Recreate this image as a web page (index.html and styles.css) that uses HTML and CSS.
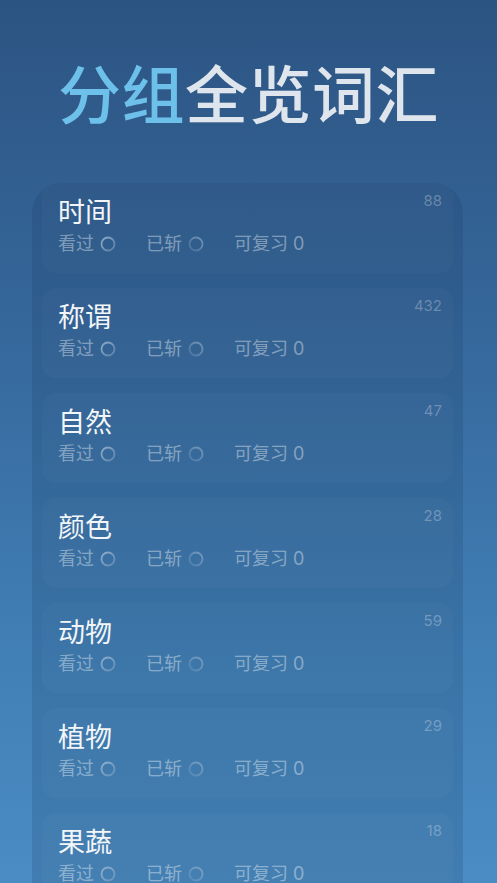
FILE: index.html
```html
<!DOCTYPE html>
<html lang="zh-CN">
<head>
<meta charset="utf-8">
<title>分组全览词汇</title>
<link rel="stylesheet" href="styles.css">
</head>
<body>
<svg width="0" height="0" class="defs">
  <defs>
    <linearGradient id="ringA" x1="0" y1="0" x2="1" y2="1">
      <stop offset="0" stop-color="#9fb8d2" stop-opacity="0.85"/>
      <stop offset="1" stop-color="#9fb8d2" stop-opacity="0.35"/>
    </linearGradient>
    <linearGradient id="ringB" x1="1" y1="0" x2="0" y2="1">
      <stop offset="0" stop-color="#9fb8d2" stop-opacity="0.6"/>
      <stop offset="1" stop-color="#9fb8d2" stop-opacity="0.2"/>
    </linearGradient>
  </defs>
</svg>
<div class="page">
  <h1 class="hero"><span class="accent">分组</span>全览词汇</h1>
  <div class="panel">
    <div class="card">
      <div class="count">88</div>
      <div class="name">时间</div>
      <div class="stats">
        <span class="stat">看过<svg class="ring" viewBox="0 0 16 16"><circle cx="8" cy="8" r="6.5" fill="none" stroke="url(#ringA)" stroke-width="1.8"/></svg></span>
        <span class="stat">已斩<svg class="ring" viewBox="0 0 16 16"><circle cx="8" cy="8" r="6.5" fill="none" stroke="url(#ringB)" stroke-width="1.8"/></svg></span>
        <span class="stat">可复习 0</span>
      </div>
    </div>
    <div class="card">
      <div class="count">432</div>
      <div class="name">称谓</div>
      <div class="stats">
        <span class="stat">看过<svg class="ring" viewBox="0 0 16 16"><circle cx="8" cy="8" r="6.5" fill="none" stroke="url(#ringA)" stroke-width="1.8"/></svg></span>
        <span class="stat">已斩<svg class="ring" viewBox="0 0 16 16"><circle cx="8" cy="8" r="6.5" fill="none" stroke="url(#ringB)" stroke-width="1.8"/></svg></span>
        <span class="stat">可复习 0</span>
      </div>
    </div>
    <div class="card">
      <div class="count">47</div>
      <div class="name">自然</div>
      <div class="stats">
        <span class="stat">看过<svg class="ring" viewBox="0 0 16 16"><circle cx="8" cy="8" r="6.5" fill="none" stroke="url(#ringA)" stroke-width="1.8"/></svg></span>
        <span class="stat">已斩<svg class="ring" viewBox="0 0 16 16"><circle cx="8" cy="8" r="6.5" fill="none" stroke="url(#ringB)" stroke-width="1.8"/></svg></span>
        <span class="stat">可复习 0</span>
      </div>
    </div>
    <div class="card">
      <div class="count">28</div>
      <div class="name">颜色</div>
      <div class="stats">
        <span class="stat">看过<svg class="ring" viewBox="0 0 16 16"><circle cx="8" cy="8" r="6.5" fill="none" stroke="url(#ringA)" stroke-width="1.8"/></svg></span>
        <span class="stat">已斩<svg class="ring" viewBox="0 0 16 16"><circle cx="8" cy="8" r="6.5" fill="none" stroke="url(#ringB)" stroke-width="1.8"/></svg></span>
        <span class="stat">可复习 0</span>
      </div>
    </div>
    <div class="card">
      <div class="count">59</div>
      <div class="name">动物</div>
      <div class="stats">
        <span class="stat">看过<svg class="ring" viewBox="0 0 16 16"><circle cx="8" cy="8" r="6.5" fill="none" stroke="url(#ringA)" stroke-width="1.8"/></svg></span>
        <span class="stat">已斩<svg class="ring" viewBox="0 0 16 16"><circle cx="8" cy="8" r="6.5" fill="none" stroke="url(#ringB)" stroke-width="1.8"/></svg></span>
        <span class="stat">可复习 0</span>
      </div>
    </div>
    <div class="card">
      <div class="count">29</div>
      <div class="name">植物</div>
      <div class="stats">
        <span class="stat">看过<svg class="ring" viewBox="0 0 16 16"><circle cx="8" cy="8" r="6.5" fill="none" stroke="url(#ringA)" stroke-width="1.8"/></svg></span>
        <span class="stat">已斩<svg class="ring" viewBox="0 0 16 16"><circle cx="8" cy="8" r="6.5" fill="none" stroke="url(#ringB)" stroke-width="1.8"/></svg></span>
        <span class="stat">可复习 0</span>
      </div>
    </div>
    <div class="card">
      <div class="count">18</div>
      <div class="name">果蔬</div>
      <div class="stats">
        <span class="stat">看过<svg class="ring" viewBox="0 0 16 16"><circle cx="8" cy="8" r="6.5" fill="none" stroke="url(#ringA)" stroke-width="1.8"/></svg></span>
        <span class="stat">已斩<svg class="ring" viewBox="0 0 16 16"><circle cx="8" cy="8" r="6.5" fill="none" stroke="url(#ringB)" stroke-width="1.8"/></svg></span>
        <span class="stat">可复习 0</span>
      </div>
    </div>
  </div>
</div>
</body>
</html>
```

FILE: styles.css
```css
* { box-sizing: border-box; }
html, body {
  margin: 0;
  padding: 0;
  height: 883px;
  overflow: hidden;
}
body {
  background: linear-gradient(180deg, #2c5482 0%, #35669a 35%, #4180b6 75%, #4b8cc4 100%);
  font-family: "Inter", "Noto Sans CJK SC", sans-serif;
  color: #f2f5f8;
}
.defs { position: absolute; width: 0; height: 0; }
.page {
  display: flex;
  flex-direction: column;
  align-items: stretch;
}
.hero {
  margin: 0;
  padding-top: 51px;
  height: 183px;
  text-align: center;
  font-family: "Noto Sans CJK SC", sans-serif;
  font-weight: 500;
  font-size: 63px;
  line-height: 80px;
  letter-spacing: 0.5px;
  color: #dfe5ec;
}
.accent { color: #6dc0e9; }
.panel {
  margin: 0 34px 0 32px;
  padding: 0 10px;
  border-radius: 30px 30px 0 0;
  overflow: hidden;
  background: rgba(20, 50, 90, 0.16);
  display: flex;
  flex-direction: column;
  gap: 15px;
  height: 720px;
}
.card {
  position: relative;
  flex: 0 0 90px;
  border-radius: 14px;
  background: rgba(255, 255, 255, 0.025);
  padding: 11px 16px 0 16px;
}
.count {
  position: absolute;
  top: 8px;
  right: 11px;
  font-size: 15px;
  line-height: 20px;
  color: rgba(255, 255, 255, 0.28);
}
.name {
  font-family: "Noto Sans CJK SC", sans-serif;
  font-size: 27px;
  line-height: 34px;
  color: #f3f6f9;
}
.stats {
  margin-top: 4px;
  display: flex;
  align-items: center;
  gap: 30px;
  font-size: 18px;
  line-height: 24px;
  color: rgba(255, 255, 255, 0.4);
}
.stat {
  display: inline-flex;
  align-items: center;
  gap: 6px;
}
.ring {
  width: 16px;
  height: 16px;
  display: block;
}
```
